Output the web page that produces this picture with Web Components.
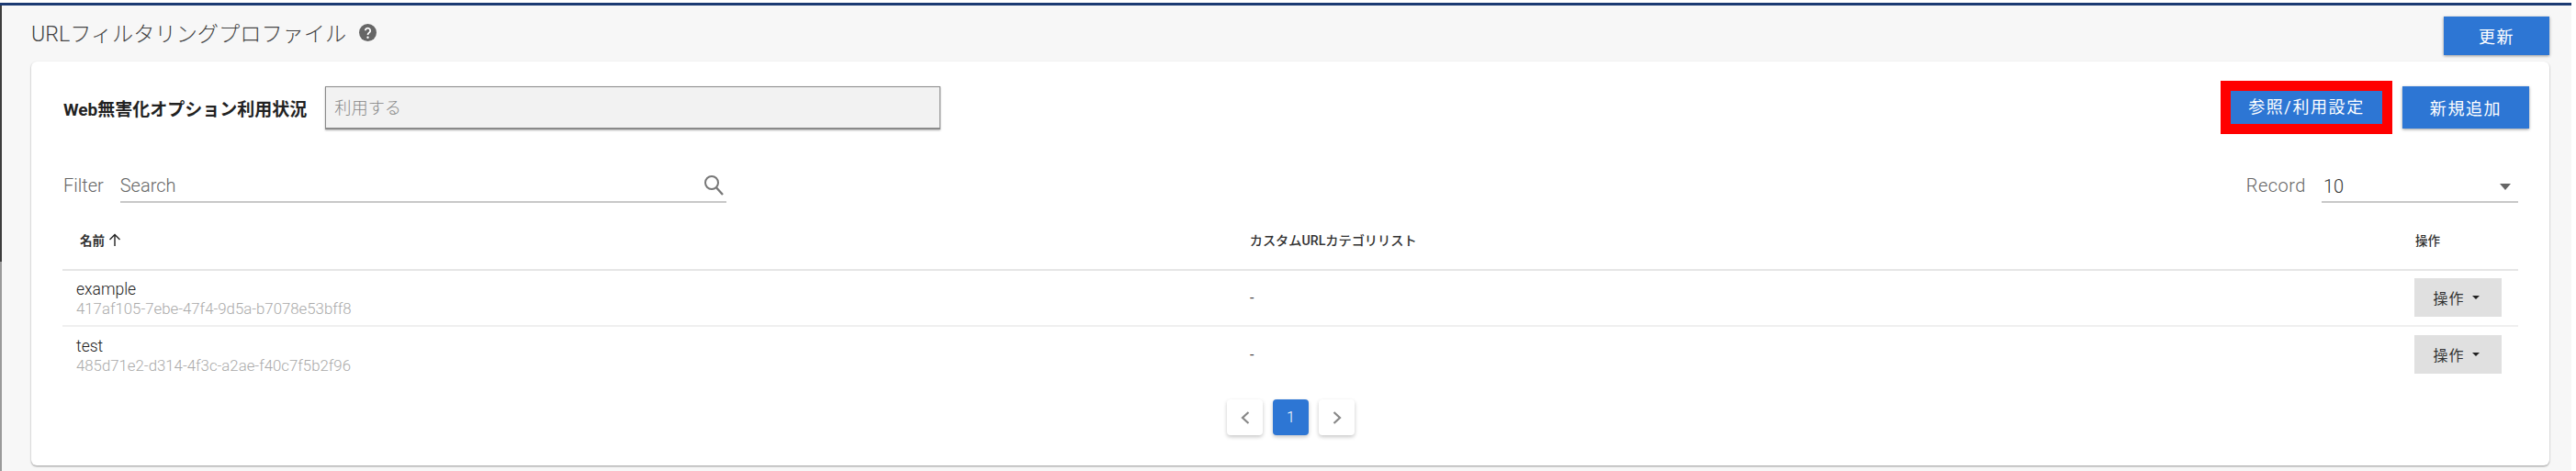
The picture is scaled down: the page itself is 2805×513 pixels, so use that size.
<!DOCTYPE html>
<html lang="ja"><head><meta charset="utf-8"><title>URLフィルタリングプロファイル</title>
<style>
html,body{margin:0;padding:0;background:#fff;overflow:hidden}
body{font-family:Roboto,"Noto Sans CJK JP",sans-serif;color:#333;width:2805px;height:513px}
</style></head><body>
<x-app>
  <x-page-head slot="head" heading="URLフィルタリングプロファイル"><x-btn>更新</x-btn></x-page-head>
  <x-card>
    <x-option-row label="Web無害化オプション利用状況" value="利用する">
      <x-highlight><x-btn compact>参照/利用設定</x-btn></x-highlight>
      <x-btn wide>新規追加</x-btn>
    </x-option-row>
    <x-filter-bar></x-filter-bar>
    <x-table>
      <x-row name="example" uid="417af105-7ebe-47f4-9d5a-b7078e53bff8"></x-row>
      <x-row name="test" uid="485d71e2-d314-4f3c-a2ae-f40c7f5b2f96"></x-row>
    </x-table>
    <x-pager></x-pager>
  </x-card>
</x-app>
<script>
function def(name, html, init){
  customElements.define(name, class extends HTMLElement{
    constructor(){super();this.attachShadow({mode:'open'}).innerHTML=html;}
    connectedCallback(){ if(init) init(this, this.shadowRoot); }
  });
}
def('x-app',`<style>
:host{display:block;width:2800px;height:513px;box-sizing:border-box;padding-top:3px}
.frame{height:510px;display:flex;box-sizing:border-box;border-top:3px solid #1b3a73;background:#f7f7f7}
.edge{width:2px;flex:none;background:linear-gradient(#3d3d3d 0,#3d3d3d 55%,#9a9a9a 55%,#9a9a9a 100%)}
.main{flex:1;min-width:0;display:flex;flex-direction:column}
</style><div class="frame"><div class="edge"></div><div class="main"><slot name="head"></slot><slot></slot></div></div>`);

def('x-page-head',`<style>
:host{display:flex;height:61px;box-sizing:border-box;padding:0 24px 0 32px;justify-content:space-between;flex:none}
.t{display:flex;align-items:center;gap:14px;height:44px;margin-top:7px;font-size:23.2px;font-weight:300;color:#444}
.r{padding-top:12px;display:flex}
::slotted(x-btn){--w:115px;--h:42px}
svg{display:block}
</style><div class="t"><span id="h"></span>
<svg width="19" height="19" viewBox="0 0 24 24"><circle cx="12" cy="12" r="12" fill="#666"/><path d="M8.600 9.300a3.400 3.400 0 1 1 5.300 2.800c-1.200.8-1.900 1.400-1.900 3" fill="none" stroke="#fff" stroke-width="2.300"/><circle cx="12" cy="18.600" r="1.500" fill="#fff"/></svg>
</div><div class="r"><slot></slot></div>`,(el,s)=>{s.getElementById('h').textContent=el.getAttribute('heading')});

def('x-btn',`<style>
:host{display:inline-flex;align-items:center;justify-content:center;box-sizing:border-box;width:var(--w,138px);height:var(--h,46px);background:#2d76d4;color:#fff;font-size:18px;letter-spacing:1.6px;box-shadow:0 1px 3px rgba(0,0,0,.4)}
:host([compact]){--w:165px;--h:36px;box-shadow:none}
:host([wide]){--w:138px;--h:46px}
</style><slot></slot>`);

def('x-highlight',`<style>
:host{display:block;border:11px solid #f00;line-height:0}
</style><slot></slot>`);

def('x-card',`<style>
:host{display:block;box-sizing:border-box;width:2742px;height:440px;margin-left:32px;background:#fff;border-radius:6px;box-shadow:0 1px 2px rgba(0,0,0,.4);padding:21px 22px 0 35px;flex:none}
</style><slot></slot>`);

def('x-option-row',`<style>
:host{display:flex;align-items:center;height:58px;justify-content:space-between}
.l{display:flex;align-items:center;gap:20px}
b{font-size:19px;font-weight:700;color:#222;white-space:nowrap}
.i{box-sizing:border-box;width:670px;height:47px;background:#f2f2f2;border:1px solid #8a8a8a;border-bottom-width:2px;box-shadow:0 1px 2px rgba(0,0,0,.3);padding-left:9px;padding-bottom:2px;display:flex;align-items:center;font-size:18.2px;font-weight:300;color:#888}
.a{display:flex;align-items:center;gap:11px}
</style><div class="l"><b id="b"></b><div class="i" id="i"></div></div><div class="a"><slot></slot></div>`,(el,s)=>{
  s.getElementById('b').textContent=el.getAttribute('label');
  s.getElementById('i').textContent=el.getAttribute('value');
});

def('x-filter-bar',`<style>
:host{display:flex;justify-content:space-between;align-items:flex-end;height:75px;margin-right:12px;font-size:20px;font-weight:300;color:#666}
.g{display:flex;align-items:flex-end;gap:18px}
.box{display:flex;align-items:center;justify-content:space-between;height:34px;border-bottom:2px solid #c8c8c8;box-sizing:content-box}
.s{width:660px}.s svg{margin-right:2px}
.r{width:214px;color:#333;padding-left:2px;box-sizing:border-box}
.c{width:0;height:0;border:6px solid transparent;border-top:7px solid #666;border-bottom:0;margin-right:8px}
.t{height:34px;line-height:34px;margin-bottom:2px}
.g.rr{gap:17px}
.g.rr .t{letter-spacing:.5px}
</style>
<div class="g"><span class="t">Filter</span><div class="box s"><span>Search</span>
<svg width="23" height="24" viewBox="0 0 23 24"><circle cx="9" cy="9" r="7" fill="none" stroke="#777" stroke-width="2"/><path d="M14.200 14.500 21 22" stroke="#777" stroke-width="2.400" fill="none"/></svg></div></div>
<div class="g rr"><span class="t">Record</span><div class="box r"><span>10</span><span class="c"></span></div></div>`);

def('x-table',`<style>
:host{display:block;margin:0 12px 0 -1px}
.h{display:grid;grid-template-columns:1273.7px 1269.3px 1fr;height:74px;box-sizing:border-box;align-items:center;border-bottom:2px solid #e6e6e6;font-size:14.2px;font-weight:500;color:#333;padding:8px 0 0 19px}
.n{display:flex;align-items:center;gap:4px;font-size:13.5px;font-weight:700}
svg{display:block}
</style>
<div class="h"><div class="n">名前<svg width="14" height="15" viewBox="0 0 14 15"><path d="M7 14V2M1.500 7 7 1.500 12.500 7" fill="none" stroke="#222" stroke-width="1.400"/></svg></div><div>カスタムURLカテゴリリスト</div><div style="font-size:13.5px">操作</div></div><slot></slot>`);

def('x-row',`<style>
:host{display:grid;grid-template-columns:1278px 1268px 1fr;box-sizing:border-box;height:60.5px;align-items:center;border-bottom:2px solid #efefef;padding-left:15px}
:host(:last-child){border-bottom:0}
.nm{font-size:17.5px;font-weight:300;color:#222;line-height:21px;padding-top:3px}
.id{font-size:16.8px;font-weight:300;color:#aaa;line-height:20px}
.d{font-size:16px;color:#444;padding-top:1px}
.op{box-sizing:border-box;width:95px;height:42px;background:#e0e0e0;color:#333;font-size:16px;letter-spacing:1px;padding-right:4px;display:flex;align-items:center;justify-content:center;gap:8px}
.op i{width:0;height:0;border:4px solid transparent;border-top:4px solid #222;border-bottom:0}
</style><div><div class="nm" id="n"></div><div class="id" id="u"></div></div><div class="d">-</div><div class="op">操作<i></i></div>`,(el,s)=>{
  s.getElementById('n').textContent=el.getAttribute('name');
  s.getElementById('u').textContent=el.getAttribute('uid');
});

def('x-pager',`<style>
:host{display:flex;justify-content:center;gap:11px;margin-top:19px;margin-left:-12px}
.p{width:39px;height:39px;border-radius:4px;background:#fff;box-shadow:0 2px 4px rgba(0,0,0,.22);display:flex;align-items:center;justify-content:center;font-size:16px;font-weight:300}
.p.on{background:#2d76d4;color:#fff}
svg{display:block}
</style><div class="p"><svg width="12" height="16" viewBox="0 0 12 16"><path d="M9.500 2 3 8l6.500 6" fill="none" stroke="#888" stroke-width="2.200"/></svg></div><div class="p on">1</div><div class="p"><svg width="12" height="16" viewBox="0 0 12 16"><path d="M2.500 2 9 8l-6.500 6" fill="none" stroke="#888" stroke-width="2.200"/></svg></div>`);
</script>
</body></html>
